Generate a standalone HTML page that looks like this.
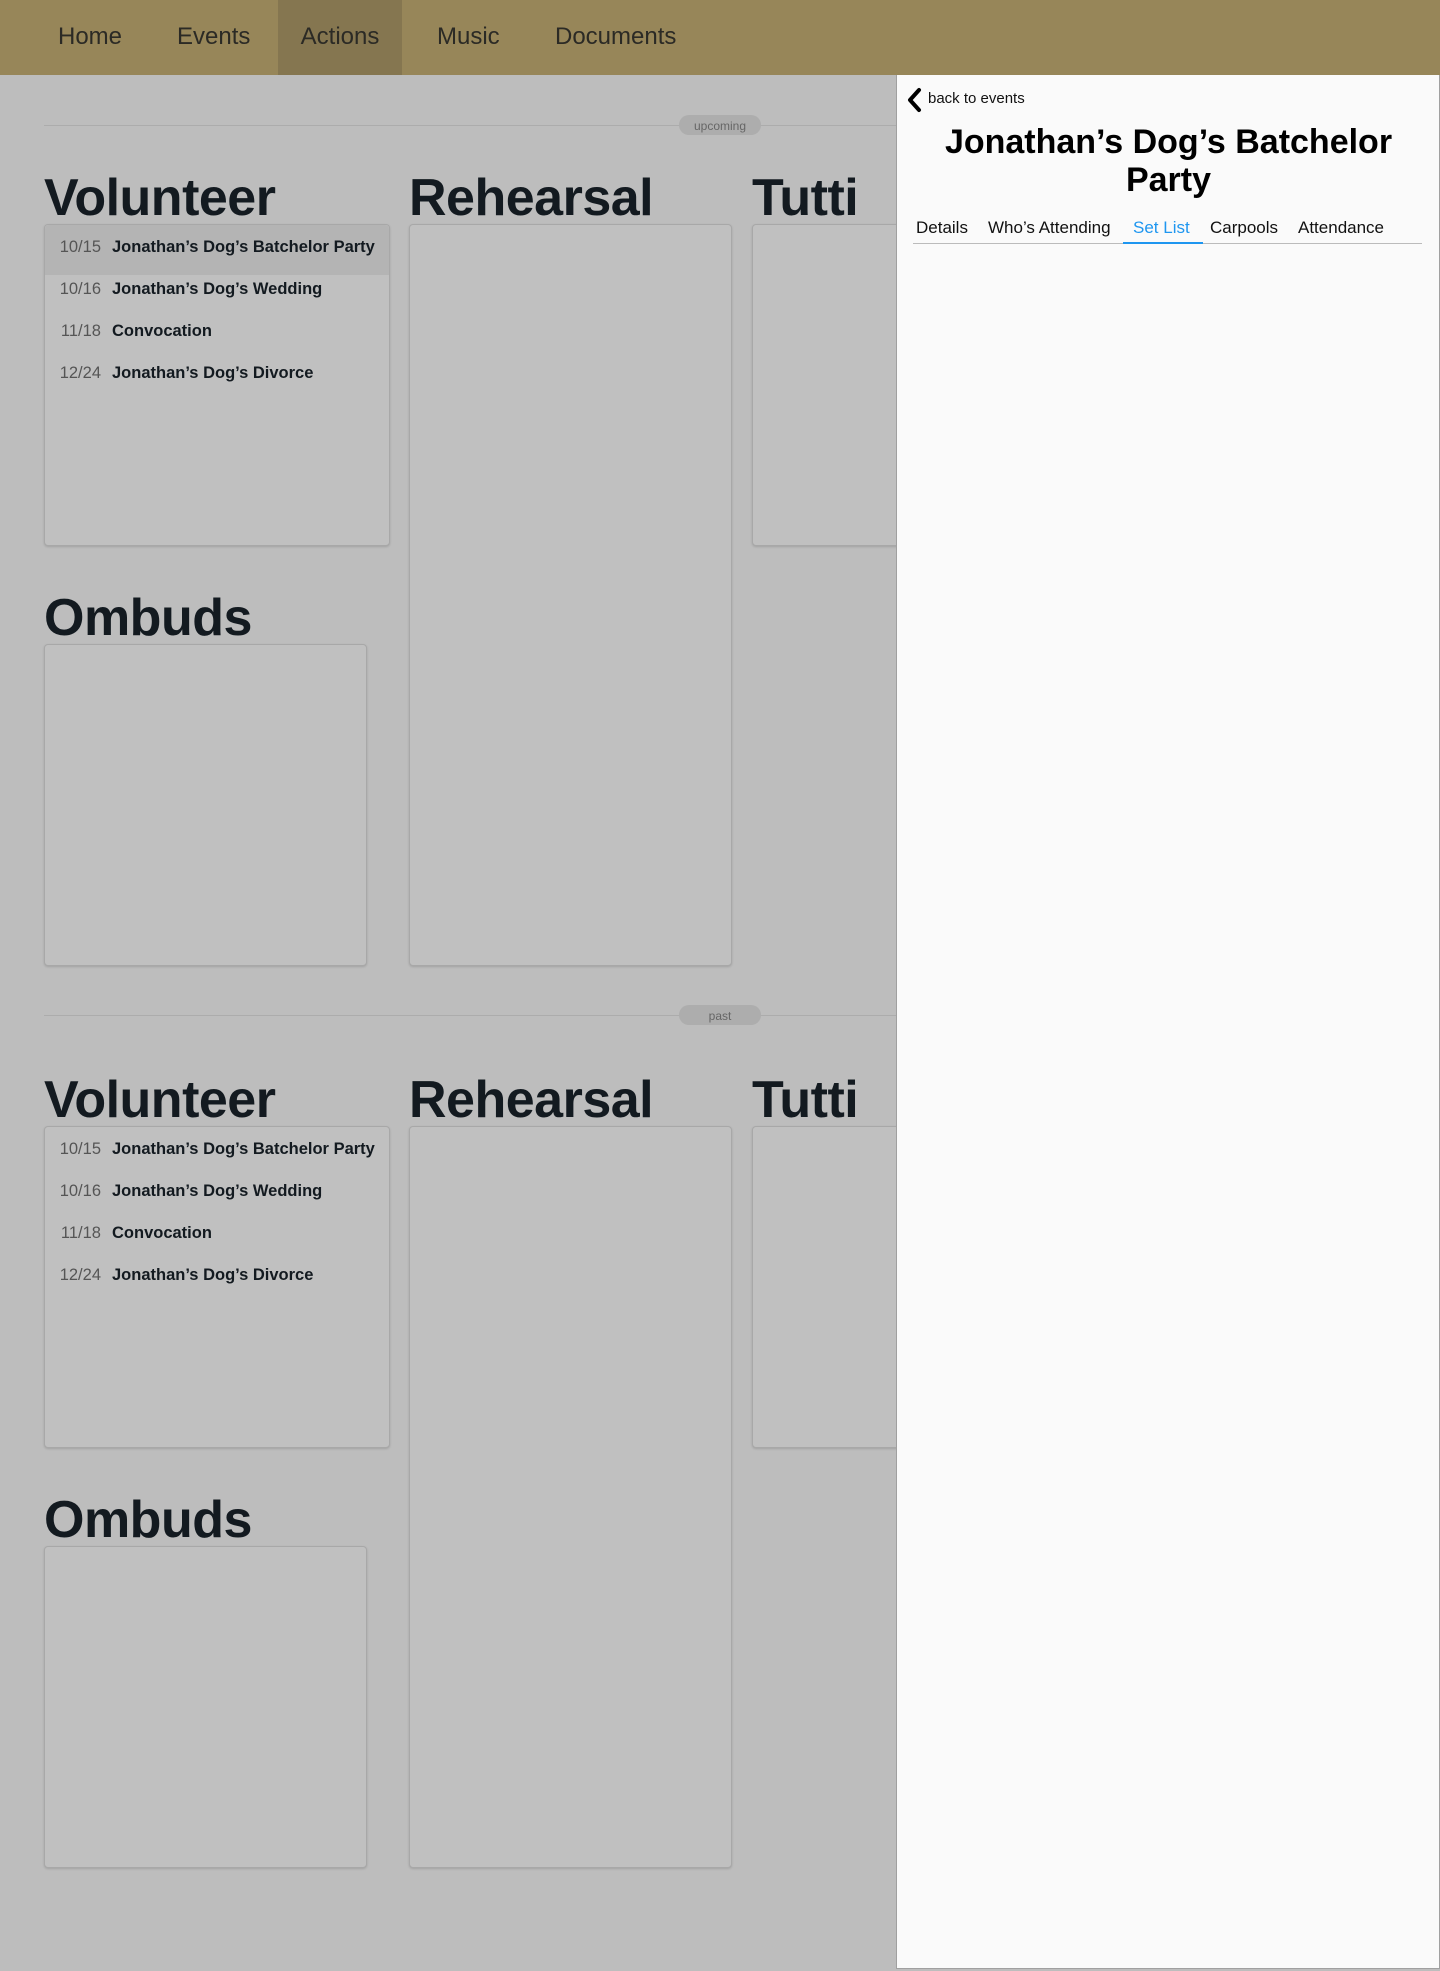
<!DOCTYPE html>
<html><head><meta charset="utf-8"><style>
*{box-sizing:border-box;margin:0;padding:0}
body{width:1440px;height:1971px;background:#bdbdbd;font-family:"Liberation Sans",sans-serif;position:relative;overflow:hidden;color:#131a20}
.nav{position:absolute;left:0;top:0;width:1440px;height:75px;background:#978659}
.nav span{position:absolute;top:0;height:75px;line-height:74px;font-size:24px;color:#2b2a25}
.nav .act{background:#857650}
.div{position:absolute;left:44px;width:852px;height:1px;background:#acacac}
.pill{position:absolute;left:679px;width:82px;height:20px;border-radius:10px;background:#adadad;color:#666;font-size:12px;text-align:center;line-height:22px}
h2{position:absolute;font-size:52px;font-weight:bold;letter-spacing:-0.5px;line-height:52px;color:#131a20}
.card{position:absolute;background:#c0c0c0;border:1px solid #a8a8a8;border-radius:4px;box-shadow:0 1px 2px rgba(0,0,0,.15)}
.row{position:absolute;left:0;width:100%;height:50px;font-size:16.5px;line-height:44px}
.row.hl{background:#b4b4b4;border-radius:4px 4px 0 0}
.row .d{position:absolute;right:288px;color:#555;width:60px;text-align:right}
.row .n{position:absolute;left:67px;font-weight:bold;color:#131a20;white-space:nowrap}
.panel{position:absolute;left:896px;top:75px;width:544px;height:1894px;background:#fafafa;border-left:1px solid #a0a0a0;border-right:1px solid #a0a0a0;border-bottom:1px solid #a0a0a0}
.tabs span{position:absolute;top:143px;font-size:17px;color:#111}
</style></head><body>
<div class="nav">
<span style="left:58px">Home</span>
<span style="left:177px">Events</span>
<span class="act" style="left:278px;width:124px;text-align:center">Actions</span>
<span style="left:437px">Music</span>
<span style="left:555px">Documents</span>
</div>

<div class="div" style="top:125px"></div>
<div class="pill" style="top:115px">upcoming</div>
<h2 style="left:44px;top:172px">Volunteer</h2>
<h2 style="left:409px;top:172px">Rehearsal</h2>
<h2 style="left:752px;top:172px">Tutti</h2>
<div class="card" style="left:44px;top:224px;width:346px;height:322px">
<div class="row hl" style="top:0"><span class="d">10/15</span><span class="n">Jonathan’s Dog’s Batchelor Party</span></div>
<div class="row" style="top:42px"><span class="d">10/16</span><span class="n">Jonathan’s Dog’s Wedding</span></div>
<div class="row" style="top:84px"><span class="d">11/18</span><span class="n">Convocation</span></div>
<div class="row" style="top:126px"><span class="d">12/24</span><span class="n">Jonathan’s Dog’s Divorce</span></div>
</div>
<div class="card" style="left:409px;top:224px;width:323px;height:742px"></div>
<div class="card" style="left:752px;top:224px;width:200px;height:322px"></div>
<h2 style="left:44px;top:592px">Ombuds</h2>
<div class="card" style="left:44px;top:644px;width:323px;height:322px"></div>

<div class="div" style="top:1015px"></div>
<div class="pill" style="top:1005px">past</div>
<h2 style="left:44px;top:1074px">Volunteer</h2>
<h2 style="left:409px;top:1074px">Rehearsal</h2>
<h2 style="left:752px;top:1074px">Tutti</h2>
<div class="card" style="left:44px;top:1126px;width:346px;height:322px">
<div class="row" style="top:0"><span class="d">10/15</span><span class="n">Jonathan’s Dog’s Batchelor Party</span></div>
<div class="row" style="top:42px"><span class="d">10/16</span><span class="n">Jonathan’s Dog’s Wedding</span></div>
<div class="row" style="top:84px"><span class="d">11/18</span><span class="n">Convocation</span></div>
<div class="row" style="top:126px"><span class="d">12/24</span><span class="n">Jonathan’s Dog’s Divorce</span></div>
</div>
<div class="card" style="left:409px;top:1126px;width:323px;height:742px"></div>
<div class="card" style="left:752px;top:1126px;width:200px;height:322px"></div>
<h2 style="left:44px;top:1494px">Ombuds</h2>
<div class="card" style="left:44px;top:1546px;width:323px;height:322px"></div>

<div class="panel">
<svg style="position:absolute;left:8px;top:12px" width="18" height="26" viewBox="0 0 18 26"><path d="M14 3 L5 13 L14 23" fill="none" stroke="#000" stroke-width="4" stroke-linecap="round" stroke-linejoin="round"/></svg>
<div style="position:absolute;left:31px;top:15px;font-size:15px;color:#111">back to events</div>
<div style="position:absolute;left:0;width:543px;top:48px;text-align:center;font-size:34px;font-weight:bold;line-height:38px;color:#000">Jonathan’s Dog’s Batchelor<br>Party</div>
<div class="tabs">
<span style="left:19px">Details</span>
<span style="left:91px">Who’s Attending</span>
<span style="left:236px;color:#1e96f0">Set List</span>
<span style="left:313px">Carpools</span>
<span style="left:401px">Attendance</span>
</div>
<div style="position:absolute;left:16px;top:168px;width:509px;height:1px;background:#bbb"></div>
<div style="position:absolute;left:226px;top:167px;width:80px;height:2px;background:#1e96f0"></div>
</div>
</body></html>
